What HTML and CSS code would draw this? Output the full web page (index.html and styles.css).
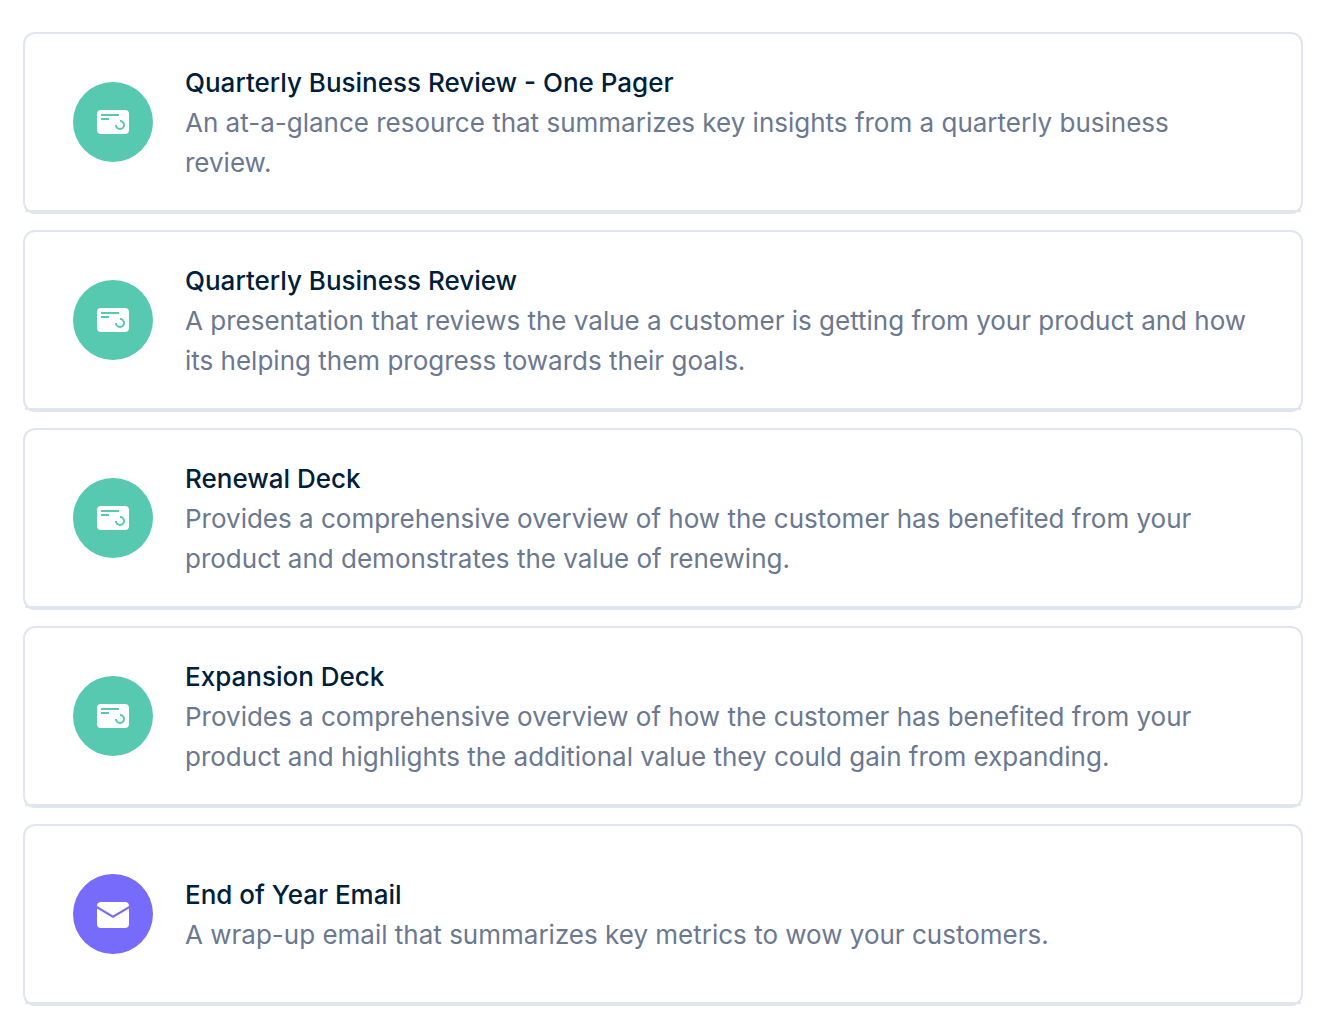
FILE: index.html
```html
<!DOCTYPE html>
<html lang="en">
<head>
    <meta charset="UTF-8">
    <meta name="viewport" content="width=device-width, initial-scale=1.0">
    <title>Templates</title>
    <link rel="stylesheet" href="styles.css">
</head>
<body>
    <!-- shared icon shapes -->
    <svg class="sprite" aria-hidden="true">
        <symbol id="deck" viewBox="0 0 32 32">
            <rect x="0" y="4" width="32" height="24" rx="4" fill="#fff"/>
            <path d="M4 9H22M4 13H12" fill="none" stroke="#56c9b0" stroke-width="2"/>
            <path d="M23 15A4 4 0 1 1 19 19" fill="none" stroke="#56c9b0" stroke-width="2"/>
        </symbol>
        <symbol id="mail" viewBox="0 0 32 32">
            <path d="M0 8A4 4 0 0 1 4 4H28A4 4 0 0 1 32 8L16 17.500Z" fill="#fff"/>
            <path d="M0 10.500L16 20L32 10.500V26A4 4 0 0 1 28 30H4A4 4 0 0 1 0 26Z" fill="#fff"/>
        </symbol>
    </svg>
    <main class="list">
        <article class="card">
            <div class="card-body">
                <span class="icon green"><svg><use href="#deck"/></svg></span>
                <div class="text">
                    <h2>Quarterly Business Review - One Pager</h2>
                    <p>An at-a-glance resource that summarizes key insights from a quarterly business review.</p>
                </div>
            </div>
        </article>
        <article class="card">
            <div class="card-body">
                <span class="icon green"><svg><use href="#deck"/></svg></span>
                <div class="text">
                    <h2>Quarterly Business Review</h2>
                    <p>A presentation that reviews the value a customer is getting from your product and how its helping them progress towards their goals.</p>
                </div>
            </div>
        </article>
        <article class="card">
            <div class="card-body">
                <span class="icon green"><svg><use href="#deck"/></svg></span>
                <div class="text">
                    <h2>Renewal Deck</h2>
                    <p>Provides a comprehensive overview of how the customer has benefited from your product and demonstrates the value of renewing.</p>
                </div>
            </div>
        </article>
        <article class="card">
            <div class="card-body">
                <span class="icon green"><svg><use href="#deck"/></svg></span>
                <div class="text">
                    <h2>Expansion Deck</h2>
                    <p>Provides a comprehensive overview of how the customer has benefited from your product and highlights the additional value they could gain from expanding.</p>
                </div>
            </div>
        </article>
        <article class="card">
            <div class="card-body">
                <span class="icon purple"><svg><use href="#mail"/></svg></span>
                <div class="text">
                    <h2>End of Year Email</h2>
                    <p>A wrap-up email that summarizes key metrics to wow your customers.</p>
                </div>
            </div>
        </article>
    </main>
</body>
</html>
```
FILE: styles.css
```css
*{
    padding: 0;
    margin: 0;
    box-sizing: border-box;
}
body
{
    background-color: #fff;
    font-family: Inter, "Liberation Sans", sans-serif;
}
.sprite
{
    display: none;
}
.list
{
    display: grid;
    gap: 16px;
    padding: 32px 27px 20px 23px;
}
.card
{
    border: 2px solid #e1e5ee;
    border-radius: 12px;
}
.card-body
{
    display: flex;
    align-items: center;
    gap: 32px;
    min-height: 178px;
    padding: 24px 48px;
    border-bottom: 2px solid #e1e5ee;
}
.icon
{
    display: flex;
    flex-shrink: 0;
    align-items: center;
    justify-content: center;
    width: 80px;
    height: 80px;
    border-radius: 50%;
}
.icon svg
{
    width: 32px;
    height: 32px;
}
.green
{
    background-color: #56c9b0;
}
.purple
{
    background-color: #766bfa;
}
.text
{
    padding-top: 2px;
    font-size: 26px;
    line-height: 40px;
}
.text h2
{
    color: #00203a;
    font-size: 26px;
    font-weight: 500;
}
.text p
{
    color: #6b7890;
}
```
